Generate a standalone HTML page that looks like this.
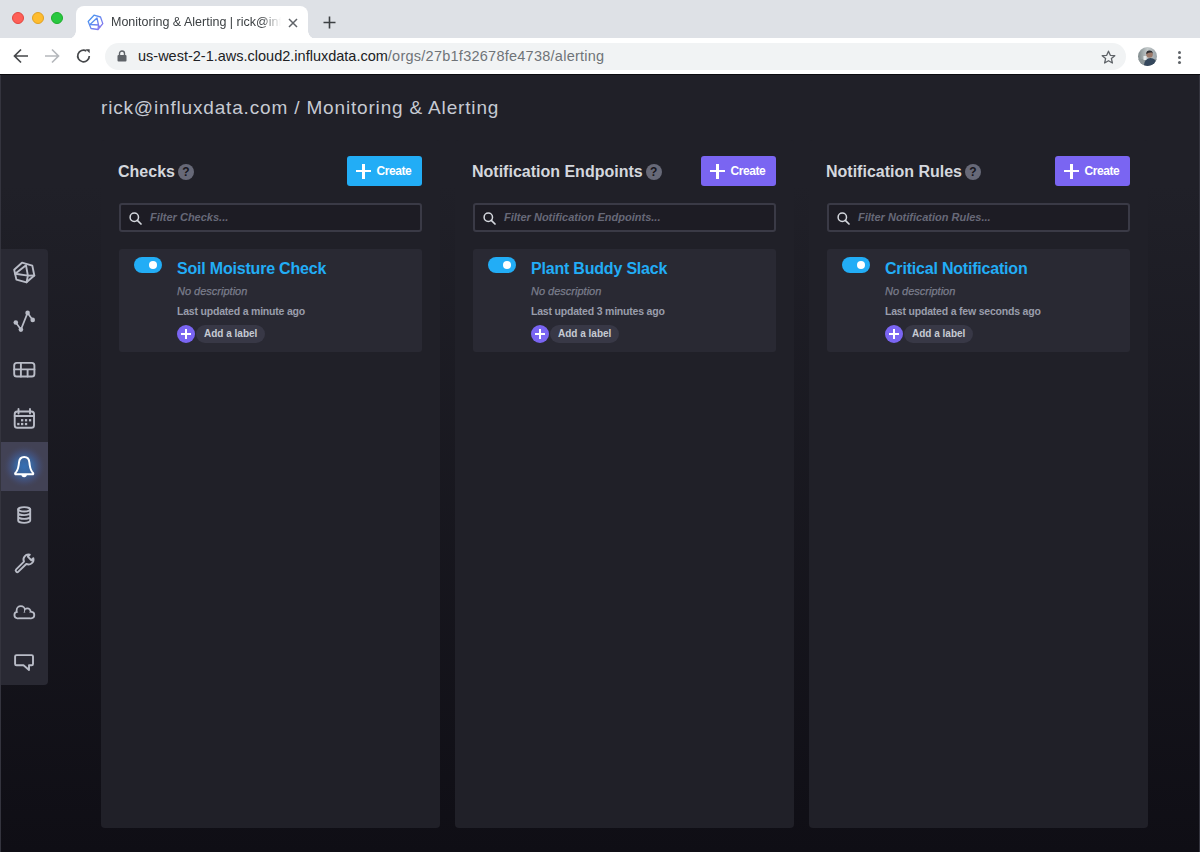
<!DOCTYPE html>
<html><head><meta charset="utf-8">
<style>
*{box-sizing:border-box}
html,body{margin:0;padding:0}
body{width:1200px;height:852px;overflow:hidden;position:relative;font-family:"Liberation Sans",sans-serif;background:#0f0e15}
.abs{position:absolute}
#tabbar{left:0;top:0;width:1200px;height:38px;background:#dee1e6}
.light{top:12px;width:12px;height:12px;border-radius:50%}
#tab{left:76px;top:6px;width:232px;height:33px;background:#fff;border-radius:8px 8px 0 0}
#tab:before,#tab:after{content:"";position:absolute;bottom:0;width:8px;height:8px;background:radial-gradient(circle at 0 0,#dee1e6 7.5px,#fff 8px)}
#tab:before{left:-8px;background:radial-gradient(circle at 0 0,#dee1e6 7.5px,#fff 8px)}
#tab:after{right:-8px;background:radial-gradient(circle at 100% 0,#dee1e6 7.5px,#fff 8px)}
#tabtitle{left:35px;top:9px;font-size:12.5px;color:#3c4043;white-space:nowrap;width:170px;overflow:hidden;-webkit-mask-image:linear-gradient(to right,#000 150px,transparent 170px)}
#toolbar{left:0;top:38px;width:1200px;height:36px;background:#fff}
#omni{left:105px;top:5px;width:1021px;height:27px;border-radius:14px;background:#f1f3f4}
#url{left:33px;top:5px;font-size:14.5px;color:#202124;white-space:nowrap;letter-spacing:0}
#url span{color:#6f7378;letter-spacing:0.25px}
#page{left:0;top:75px;width:1200px;height:777px;background:linear-gradient(to bottom,#202028 0px,#202028 110px,#0f0e15 777px)}
#topline{left:0;top:74px;width:1200px;height:1px;background:#0b0b0f}
#edgeL{left:0;top:75px;width:1px;height:777px;background:#34343e}
#edgeR{left:1199px;top:75px;width:1px;height:777px;background:#34343e}
#title{left:101px;top:97px;font-size:19px;letter-spacing:0.83px;color:#c6cad3;white-space:nowrap}
.panel{top:140px;width:339px;height:688px;background:#202028;border-radius:4px}
.ph{position:absolute;left:17px;top:23px;font-size:16px;font-weight:700;color:#d4d7dd;white-space:nowrap}
.q{display:inline-block;width:16px;height:16px;border-radius:50%;background:#676978;color:#17161d;font-size:12px;font-weight:700;text-align:center;line-height:16px;vertical-align:1px;margin-left:3px}
.btn{position:absolute;left:246px;top:16px;width:75px;height:30px;border-radius:3px;color:#fff;font-size:11.5px;font-weight:700}
.btn .pl{position:absolute;left:9px;top:7.5px;width:15px;height:15px}
.btn .pl:before{content:"";position:absolute;left:6.4px;top:0;width:2.2px;height:15px;background:#fff}
.btn .pl:after{content:"";position:absolute;left:0;top:6.4px;width:15px;height:2.2px;background:#fff}
.btn .bt{position:absolute;left:29.5px;top:8px;font-size:12px;letter-spacing:-0.45px}
.filter{position:absolute;left:18px;top:63px;width:303px;height:29px;border:2px solid #3a3a46;border-radius:3px;background:#1d1c24}
.filter svg{position:absolute;left:8px;top:7px}
.filter .ft{position:absolute;left:29px;top:6px;font-size:11px;font-weight:700;font-style:italic;color:#676978;white-space:nowrap}
.card{position:absolute;left:18px;top:109px;width:303px;height:103px;background:#292933;border-radius:3px}
.tog{position:absolute;left:15px;top:8px;width:28px;height:16px;border-radius:8px;background:#22adf6}
.tog:after{content:"";position:absolute;left:15px;top:4px;width:8px;height:8px;border-radius:50%;background:#fff}
.ct{position:absolute;left:58px;top:11px;font-size:16px;font-weight:700;color:#22adf6;white-space:nowrap;letter-spacing:-0.2px}
.nd{position:absolute;left:58px;top:36px;font-size:11px;font-style:italic;color:#7a7d8c;white-space:nowrap;-webkit-text-stroke:0.25px #7a7d8c}
.lu{position:absolute;left:58px;top:56px;font-size:10.5px;letter-spacing:-0.2px;font-weight:700;color:#999dab;white-space:nowrap}
.addc{position:absolute;left:58px;top:76px;width:18px;height:18px;border-radius:50%;background:#7a65f2}
.addc:before{content:"";position:absolute;left:8px;top:4px;width:2px;height:10px;background:#fff}
.addc:after{content:"";position:absolute;left:4px;top:8px;width:10px;height:2px;background:#fff}
.lab{position:absolute;left:77px;top:76px;width:69px;height:18px;border-radius:9px;background:#383846;color:#c6cad3;font-size:10px;font-weight:700;line-height:18px;padding-left:8px;white-space:nowrap}
#side{left:0;top:249px;width:48px;height:436px;background:#292933;border-radius:0 4px 4px 0}
#active{left:0;top:442px;width:48px;height:49px;background:#424255}
</style></head>
<body>
<div id="tabbar" class="abs">
  <div class="abs light" style="left:12px;background:#fe5f57;border:0.5px solid #e14640"></div>
  <div class="abs light" style="left:32px;background:#febc2e;border:0.5px solid #dfa123"></div>
  <div class="abs light" style="left:51px;background:#28c840;border:0.5px solid #1dad2b"></div>
  <div id="tab" class="abs">
    <svg class="abs" style="left:11px;top:8px" width="17" height="17" viewBox="0 0 17 17"><defs><linearGradient id="fav" x1="0" y1="0" x2="1" y2="1"><stop offset="0" stop-color="#3f9af0"/><stop offset="1" stop-color="#8e72ee"/></linearGradient></defs><g fill="none" stroke="url(#fav)" stroke-width="1.3" stroke-linejoin="round"><path d="M7 1.2 L13.5 3 L15.8 9.6 L11 15.5 L4 14.5 L1.2 7.5 Z"/><path d="M3 10.5 L10 4 L11.5 11 Z M11.5 11 L13 13.5 M11 15.5 L11.5 11"/></g></svg>
    <div id="tabtitle" class="abs">Monitoring &amp; Alerting | rick@influxdata.com</div>
    <svg class="abs" style="left:212px;top:12px" width="10" height="10" viewBox="0 0 10 10"><path d="M1 1L9 9M9 1L1 9" stroke="#5f6368" stroke-width="1.5"/></svg>
  </div>
  <svg class="abs" style="left:323px;top:16px" width="13" height="13" viewBox="0 0 13 13"><path d="M6.5 0.5V12.5M0.5 6.5H12.5" stroke="#3c4043" stroke-width="1.6"/></svg>
</div>
<div id="toolbar" class="abs">
  <svg class="abs" style="left:13px;top:10px" width="16" height="16" viewBox="0 0 16 16"><path d="M15 8H2M8 1.5L1.5 8L8 14.5" fill="none" stroke="#45474a" stroke-width="1.7"/></svg>
  <svg class="abs" style="left:44px;top:10px" width="16" height="16" viewBox="0 0 16 16"><path d="M1 8H14M8 1.5L14.5 8L8 14.5" fill="none" stroke="#b5b8bc" stroke-width="1.7"/></svg>
  <svg class="abs" style="left:75px;top:10px" width="16" height="16" viewBox="0 0 16 16"><path d="M14.3 8 A5.8 5.8 0 1 1 11.4 2.98" fill="none" stroke="#45474a" stroke-width="1.7"/><path d="M10.6 1.2 H14.7 V5.3 Z" fill="#45474a"/></svg>
  <div id="omni" class="abs">
    <svg class="abs" style="left:12px;top:7px" width="10" height="12" viewBox="0 0 10 12"><path d="M2.5 5V3.5A2.5 2.5 0 0 1 7.5 3.5V5" fill="none" stroke="#5f6368" stroke-width="1.4"/><rect x="0.5" y="5" width="9" height="6.5" rx="1" fill="#5f6368"/></svg>
    <div id="url" class="abs">us-west-2-1.aws.cloud2.influxdata.com<span>/orgs/27b1f32678fe4738/alerting</span></div>
    <svg class="abs" style="left:996px;top:6.5px" width="15" height="15" viewBox="0 0 15 15"><path d="M7.5 1.2L9.3 5.3L13.8 5.7L10.4 8.6L11.4 13L7.5 10.7L3.6 13L4.6 8.6L1.2 5.7L5.7 5.3Z" fill="none" stroke="#5f6368" stroke-width="1.3" stroke-linejoin="round"/></svg>
  </div>
  <svg class="abs" style="left:1138px;top:9px" width="19" height="19" viewBox="0 0 19 19"><defs><clipPath id="av"><circle cx="9.5" cy="9.5" r="9.5"/></clipPath><linearGradient id="avbg" x1="0" y1="0" x2="1" y2="0"><stop offset="0" stop-color="#7f8a8c"/><stop offset="0.5" stop-color="#c4cacb"/><stop offset="1" stop-color="#9aa3a8"/></linearGradient></defs><g clip-path="url(#av)"><rect width="19" height="19" fill="url(#avbg)"/><rect x="0" y="12" width="19" height="7" fill="#8d9698"/><ellipse cx="12.5" cy="18" rx="6.5" ry="7" fill="#34475c"/><circle cx="11.5" cy="7.5" r="3.3" fill="#9c7a6b"/><path d="M8.2 6.5 Q8.5 3.3 11.5 3.5 Q14.8 3.6 14.8 6.8 L13.8 5.6 Q11 5.2 8.6 6.9Z" fill="#2c2c30"/><rect x="5.5" y="9" width="3" height="4" fill="#e6e9ea"/></g></svg>
  <div class="abs" style="left:1177.5px;top:12.5px;width:3px;height:3px;border-radius:50%;background:#5f6368;box-shadow:0 5px 0 #5f6368,0 10px 0 #5f6368"></div>
</div>
<div id="topline" class="abs"></div>
<div id="page" class="abs"></div>
<div id="edgeR" class="abs"></div>

<div id="title" class="abs">rick@influxdata.com / Monitoring &amp; Alerting</div>

<!-- panels -->
<div class="abs panel" style="left:101px">
  <div class="ph">Checks<span class="q">?</span></div>
  <div class="btn" style="background:#22adf6"><div class="pl"></div><div class="bt">Create</div></div>
  <div class="filter"><svg width="13" height="13" viewBox="0 0 13 13"><circle cx="5.3" cy="5.3" r="4.2" fill="none" stroke="#d4d7dd" stroke-width="1.5"/><path d="M8.3 8.3L12 12" stroke="#d4d7dd" stroke-width="1.7" stroke-linecap="round"/></svg><div class="ft">Filter Checks...</div></div>
  <div class="card"><div class="tog"></div><div class="ct">Soil Moisture Check</div><div class="nd">No description</div><div class="lu">Last updated a minute ago</div><div class="addc"></div><div class="lab">Add a label</div></div>
</div>
<div class="abs panel" style="left:455px">
  <div class="ph">Notification Endpoints<span class="q">?</span></div>
  <div class="btn" style="background:#7a65f2"><div class="pl"></div><div class="bt">Create</div></div>
  <div class="filter"><svg width="13" height="13" viewBox="0 0 13 13"><circle cx="5.3" cy="5.3" r="4.2" fill="none" stroke="#d4d7dd" stroke-width="1.5"/><path d="M8.3 8.3L12 12" stroke="#d4d7dd" stroke-width="1.7" stroke-linecap="round"/></svg><div class="ft">Filter Notification Endpoints...</div></div>
  <div class="card"><div class="tog"></div><div class="ct">Plant Buddy Slack</div><div class="nd">No description</div><div class="lu">Last updated 3 minutes ago</div><div class="addc"></div><div class="lab">Add a label</div></div>
</div>
<div class="abs panel" style="left:809px">
  <div class="ph">Notification Rules<span class="q">?</span></div>
  <div class="btn" style="background:#7a65f2"><div class="pl"></div><div class="bt">Create</div></div>
  <div class="filter"><svg width="13" height="13" viewBox="0 0 13 13"><circle cx="5.3" cy="5.3" r="4.2" fill="none" stroke="#d4d7dd" stroke-width="1.5"/><path d="M8.3 8.3L12 12" stroke="#d4d7dd" stroke-width="1.7" stroke-linecap="round"/></svg><div class="ft">Filter Notification Rules...</div></div>
  <div class="card"><div class="tog"></div><div class="ct">Critical Notification</div><div class="nd">No description</div><div class="lu">Last updated a few seconds ago</div><div class="addc"></div><div class="lab">Add a label</div></div>
</div>

<!-- sidebar -->
<div id="side" class="abs"></div>
<div id="active" class="abs"></div>
<svg class="abs" style="left:0;top:249px" width="48" height="436" viewBox="0 249 48 436">
 <defs><radialGradient id="glow" cx="50%" cy="50%" r="50%"><stop offset="0" stop-color="#346fb4" stop-opacity="1"/><stop offset="0.4" stop-color="#3a69a6" stop-opacity="0.85"/><stop offset="0.72" stop-color="#44568a" stop-opacity="0.4"/><stop offset="1" stop-color="#424255" stop-opacity="0"/></radialGradient></defs>
 <g fill="none" stroke="#b9bcc7" stroke-width="1.9" stroke-linejoin="round" stroke-linecap="round">
  <!-- logo -->
  <path d="M22 262.7 L32.3 265.6 L34.3 275.5 L26.5 282.3 L16.4 279.6 L14.2 269.8 Z"/>
  <path d="M15.2 273.8 L26 265.3 L27.9 275.6 Z M27.9 275.6 L34.3 275.5 M27.9 275.6 L26.6 282.2"/>
  <!-- data explorer -->
  <path d="M15.8 322.5 L20.9 329.6 L27.6 312.9 L32.7 319.9" stroke-width="1.7"/>
  <!-- dashboards -->
  <rect x="14.2" y="362.9" width="20.2" height="13.6" rx="2.6"/>
  <path d="M14.2 369.4 H34.4 M20.9 362.9 V376.5 M27.6 369.4 V376.5"/>
  <!-- calendar -->
  <rect x="14.7" y="411.5" width="19.3" height="16.3" rx="2.6"/>
  <path d="M14.7 416 H34 M18.5 409 V413.6 M30 409 V413.6"/>
  <!-- database -->
  <ellipse cx="24.2" cy="509.3" rx="6" ry="2.2"/>
  <path d="M18.2 509.3 V520.6 A6 2.3 0 0 0 30.2 520.6 V509.3 M18.2 512.9 A6 2.2 0 0 0 30.2 512.9 M18.2 516.7 A6 2.2 0 0 0 30.2 516.7"/>
  <!-- wrench -->
  <path d="M23.99 561.65 A5 5 0 0 1 29.84 554.68 L27.84 556.64 L31.34 560.21 L33.34 558.25 A5 5 0 0 1 26.27 563.97 L18.4 571.6 A1.55 1.55 0 0 1 16.2 569.4 Z"/>
  <!-- chat -->
  <path d="M16.5 655.1 H31.6 A1.4 1.4 0 0 1 33 656.5 V663.9 A1.4 1.4 0 0 1 31.6 665.3 H29 V670 L23.5 665.3 H16.5 A1.4 1.4 0 0 1 15.1 663.9 V656.5 A1.4 1.4 0 0 1 16.5 655.1 Z"/>
 </g>
 <g fill="#b9bcc7">
  <circle cx="15.8" cy="322.5" r="2.3"/><circle cx="20.9" cy="329.6" r="2.3"/><circle cx="27.6" cy="312.9" r="2.3"/><circle cx="32.7" cy="319.9" r="2.3"/>
  <rect x="21" y="419.1" width="2.3" height="2.3"/><rect x="24.9" y="419.1" width="2.3" height="2.3"/><rect x="28.9" y="419.1" width="2.3" height="2.3"/>
  <rect x="17.2" y="422.9" width="2.3" height="2.3"/><rect x="21" y="422.9" width="2.3" height="2.3"/><rect x="24.9" y="422.9" width="2.3" height="2.3"/>
  <!-- cloud outer -->
  <circle cx="17.6" cy="615.1" r="4.1"/><circle cx="20.8" cy="610.4" r="5.1"/><circle cx="27.3" cy="611.6" r="4.2"/><circle cx="31.1" cy="615.1" r="4.1"/><rect x="17.6" y="611" width="13.5" height="8.2"/>
 </g>
 <g fill="#292933">
  <circle cx="17.6" cy="615.1" r="2.3"/><circle cx="20.8" cy="610.4" r="3.3"/><circle cx="27.3" cy="611.6" r="2.4"/><circle cx="31.1" cy="615.1" r="2.3"/><rect x="17.6" y="612.6" width="13.5" height="4.8"/>
 </g>
 <!-- bell -->
 <circle cx="24.2" cy="466.5" r="22" fill="url(#glow)"/>
 <path d="M24.2 457.1 C20.6 457.1 19.3 459.5 19 462.5 C18.7 466 18.2 469 16.5 471.5 L15.3 473 C14.9 473.8 15.2 474.3 16 474.3 H32.4 C33.2 474.3 33.5 473.8 33.1 473 L31.9 471.5 C30.2 469 29.7 466 29.4 462.5 C29.1 459.5 27.8 457.1 24.2 457.1 Z M22.4 474.5 A1.8 1.8 0 0 0 26 474.5" fill="none" stroke="#ffffff" stroke-width="2" stroke-linejoin="round"/>
</svg>
<div id="edgeL" class="abs"></div>
</body></html>
